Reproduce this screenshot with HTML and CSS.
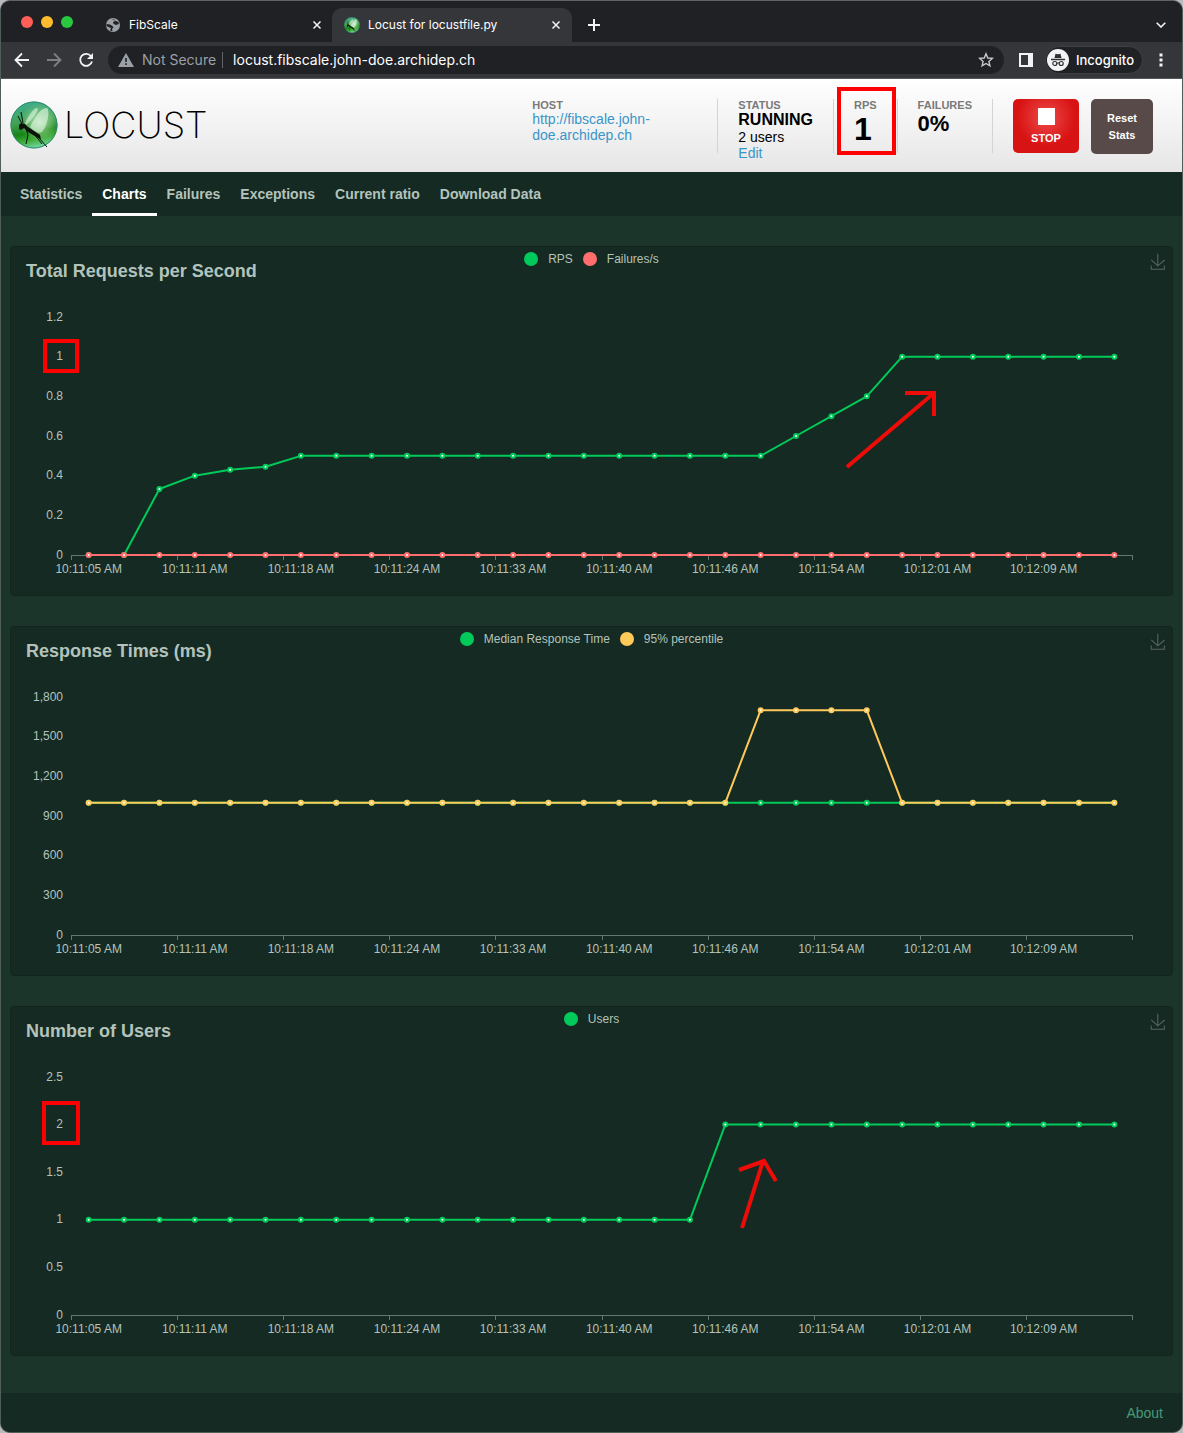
FILE: index.html
```html
<!DOCTYPE html>
<html lang="en">
<head>
<meta charset="utf-8">
<meta name="viewport" content="width=device-width, initial-scale=1">
<title>Locust for locustfile.py</title>
<link rel="stylesheet" href="styles.css">
</head>
<body>
<svg class="defs" width="0" height="0" aria-hidden="true">
  <defs>
    <linearGradient id="ball" x1="0.4" y1="0" x2="0.6" y2="1">
      <stop offset="0" stop-color="#3fae8d"/><stop offset="0.4" stop-color="#43a155"/>
      <stop offset="0.64" stop-color="#168416"/><stop offset="0.8" stop-color="#3dab38"/><stop offset="1" stop-color="#7ce0b4"/>
    </linearGradient>
    <radialGradient id="glow" cx="0.62" cy="0.45" r="0.42">
      <stop offset="0" stop-color="#e4f7dc" stop-opacity="0.8"/><stop offset="1" stop-color="#a8e09a" stop-opacity="0"/>
    </radialGradient>
    <symbol id="locust" viewBox="0 0 48 48">
      <circle cx="24" cy="24" r="23.500" fill="url(#ball)"/>
      <circle cx="24" cy="24" r="23.500" fill="url(#glow)"/>
      <circle cx="24" cy="24" r="23" fill="none" stroke="#2d8a78" stroke-width="1"/>
      <path d="M15 23C18 14 24 7 27 7C30 8 23 18 16 24Z" fill="#d9f3dc" opacity="0.65"/>
      <path d="M20 26C25 15 32 6 37 7C40 9 38 24 32 31C28 33 24 30 20 26Z" fill="#d9f3dc" opacity="0.65"/>
      <path d="M9 24L11 22L15 23L18 26L24 30L30 34L31 38L28 37L18 31L14 27L11 29L9 28Z" fill="#0a120a"/>
      <path d="M12 23L8 15M13 22L11 11M16 28L18 34L16 43M25 34L32 43M29 37L37 46" fill="none" stroke="#0a120a" stroke-width="1"/>
    </symbol>
    <symbol id="close" viewBox="0 0 10 10">
      <path d="M1.500 1.500L8.500 8.500M8.500 1.500L1.500 8.500" fill="none" stroke="currentColor" stroke-width="1.500"/>
    </symbol>
    <symbol id="download" viewBox="0 -2 60 62">
      <path d="M4.700 22.900L29.300 45.500L54.700 23.400M4.600 43.600L4.600 58L53.800 58L53.800 43.600M29.200 45.100L29.200 0" fill="none" stroke="currentColor" stroke-width="4"/>
    </symbol>
  </defs>
</svg>

<div class="window">
  <div class="tabstrip">
    <div class="lights"><span class="light red"></span><span class="light amber"></span><span class="light green"></span></div>
    <div class="tab">
      <svg class="favicon" viewBox="0 0 16 16" aria-hidden="true"><circle cx="8" cy="8" r="7" fill="#9aa0a6"/><path d="M6.500 2.200L9.500 2.500L10 4L8 5L8.500 6.800L11 8L13.800 7L13.500 5ZM1.500 7L5 7.500L7.500 9L8.500 10.500L7 12L7.500 14.200L5 13.500L6 11L3.500 10L1.500 9Z" fill="#202124"/></svg>
      <span class="tab-title">FibScale</span>
      <button class="icon-button" aria-label="Close tab"><svg width="10" height="10"><use href="#close"/></svg></button>
    </div>
    <div class="tab active">
      <svg class="favicon" aria-hidden="true"><use href="#locust"/></svg>
      <span class="tab-title">Locust for locustfile.py</span>
      <button class="icon-button" aria-label="Close tab"><svg width="10" height="10"><use href="#close"/></svg></button>
    </div>
    <button class="icon-button new-tab" aria-label="New tab"><svg width="12" height="12" viewBox="0 0 12 12"><path d="M6 0V12M0 6H12" stroke="currentColor" stroke-width="2"/></svg></button>
    <button class="icon-button tab-search" aria-label="Search tabs"><svg width="10" height="6" viewBox="0 0 10 6"><path d="M0.700 0.700L5 5L9.300 0.700" fill="none" stroke="currentColor" stroke-width="1.600"/></svg></button>
  </div>

  <div class="toolbar">
    <button class="icon-button" aria-label="Back"><svg width="16" height="16" viewBox="0 0 16 16"><path d="M15 8H2M8 1.500L1.500 8L8 14.500" fill="none" stroke="currentColor" stroke-width="1.800"/></svg></button>
    <button class="icon-button dim" aria-label="Forward"><svg width="16" height="16" viewBox="0 0 16 16"><path d="M1 8H14M8 1.500L14.500 8L8 14.500" fill="none" stroke="currentColor" stroke-width="1.800"/></svg></button>
    <button class="icon-button" aria-label="Reload"><svg width="16" height="16" viewBox="0 0 16 16"><path d="M13 4.200A6 6 0 1 0 14 9.500" fill="none" stroke="currentColor" stroke-width="1.800"/><path d="M15 1V7H9Z" fill="currentColor"/></svg></button>
    <div class="address">
      <svg width="16" height="14" viewBox="0 0 16 14" aria-hidden="true"><path d="M8 0L16 14H0Z" fill="#9aa0a6"/><path d="M8 5V9M8 10.200V12" stroke="#202124" stroke-width="1.600"/></svg>
      <label class="insecure" for="url">Not Secure</label>
      <input id="url" class="url" type="text" value="locust.fibscale.john-doe.archidep.ch">
      <button class="icon-button star" aria-label="Bookmark this page"><svg width="16" height="16" viewBox="0 0 16 16"><path d="M8 1.800L9.800 6L14.300 6.400L10.900 9.400L11.900 13.800L8 11.500L4.100 13.800L5.100 9.400L1.700 6.400L6.200 6Z" fill="none" stroke="currentColor" stroke-width="1.400"/></svg></button>
    </div>
    <button class="icon-button panel" aria-label="Side panel"><svg width="14" height="14" viewBox="0 0 14 14"><path d="M1 1H13V13H1Z" fill="none" stroke="currentColor" stroke-width="2"/><path d="M9 1H13V13H9Z" fill="currentColor"/></svg></button>
    <button class="incognito">
      <svg width="22" height="22" viewBox="0 0 22 22" aria-hidden="true"><circle cx="11" cy="11" r="11" fill="#f1f3f4"/><path d="M7.500 9L8.500 4.800L11 5.300L13.500 4.800L14.500 9Z" fill="#303134"/><path d="M4 10.500H18" stroke="#303134" stroke-width="1.400"/><path d="M9.800 14.300Q11 13.500 12.200 14.300" fill="none" stroke="#303134"/><circle cx="7.800" cy="14.500" r="2" fill="none" stroke="#303134" stroke-width="1.200"/><circle cx="14.200" cy="14.500" r="2" fill="none" stroke="#303134" stroke-width="1.200"/></svg>
      Incognito
    </button>
    <button class="icon-button menu" aria-label="Menu"><svg width="4" height="14" viewBox="0 0 4 14"><path d="M0.500 0.500H3.500V3.500H0.500ZM0.500 5.500H3.500V8.500H0.500ZM0.500 10.500H3.500V13.500H0.500Z" fill="currentColor"/></svg></button>
  </div>

  <header class="top">
    <a class="logo" href="#"><svg width="48" height="48" aria-hidden="true"><use href="#locust"/></svg><span class="wordmark">LOCUST</span></a>
    <div class="stats">
      <div class="stat host"><div class="label">HOST</div><a href="#">http://fibscale.john-doe.archidep.ch</a></div>
      <div class="stat"><div class="label">STATUS</div><div class="state">RUNNING</div><div>2 users</div><a href="#">Edit</a></div>
      <div class="stat rps"><div class="label">RPS</div><div class="rate">1</div><span class="mark mark-rps"></span></div>
      <div class="stat"><div class="label">FAILURES</div><div class="ratio">0%</div></div>
    </div>
    <div class="actions">
      <button class="stop"><span class="square"></span>STOP</button>
      <button class="reset">Reset Stats</button>
    </div>
  </header>

  <nav class="menu-bar">
    <a href="#">Statistics</a>
    <a href="#" class="current">Charts</a>
    <a href="#">Failures</a>
    <a href="#">Exceptions</a>
    <a href="#">Current ratio</a>
    <a href="#">Download Data</a>
  </nav>

  <main>
    <section class="card">
      <div class="card-head">
        <h2>Total Requests per Second</h2>
        <ul class="legend"><li><span class="dot green-dot"></span>RPS</li><li><span class="dot red-dot"></span>Failures/s</li></ul>
        <button class="icon-button save" aria-label="Download as image"><svg width="16" height="17"><use href="#download"/></svg></button>
      </div>
      <div class="plot" data-chart="rps"></div>
      <span class="mark mark-one"></span>
      <svg class="arrow arrow-rps" width="96" height="84" viewBox="0 0 96 84" aria-hidden="true"><path d="M4 79L91 5M62 5H91V28"/></svg>
    </section>
    <section class="card">
      <div class="card-head">
        <h2>Response Times (ms)</h2>
        <ul class="legend"><li><span class="dot green-dot"></span>Median Response Time</li><li><span class="dot yellow-dot"></span>95% percentile</li></ul>
        <button class="icon-button save" aria-label="Download as image"><svg width="16" height="17"><use href="#download"/></svg></button>
      </div>
      <div class="plot" data-chart="times"></div>
    </section>
    <section class="card">
      <div class="card-head">
        <h2>Number of Users</h2>
        <ul class="legend"><li><span class="dot green-dot"></span>Users</li></ul>
        <button class="icon-button save" aria-label="Download as image"><svg width="16" height="17"><use href="#download"/></svg></button>
      </div>
      <div class="plot" data-chart="users"></div>
      <span class="mark mark-two"></span>
      <svg class="arrow arrow-users" width="46" height="78" viewBox="0 0 46 78" aria-hidden="true"><path d="M7 73L28 6M4 15L29 6L41 26"/></svg>
    </section>
  </main>

  <footer><a href="#">About</a></footer>
</div>
<script src="charts.js"></script>
</body>
</html>
```
FILE: styles.css
```css
* { box-sizing: border-box; }
body {
  margin: 0;
  background: #b9babc;
  font-family: "Liberation Sans", Arial, sans-serif;
  font-size: 14px;
  line-height: 16px;
}
button { font: inherit; border: 0; padding: 0; margin: 0; background: none; cursor: pointer; }
a { text-decoration: none; }
.defs { position: absolute; }
.window {
  display: flex;
  flex-direction: column;
  min-height: 100vh;
  border: 1px solid #4f5f58;
  border-top-color: #5f6164;
  border-radius: 10px;
  overflow: hidden;
  background: #1b352b;
}

/* Browser chrome */
.tabstrip, .toolbar { font-family: Inter, "Liberation Sans", sans-serif; color: #fff; display: flex; align-items: center; }
.tabstrip { height: 41px; background: #202124; padding: 7px 16px 0 20px; }
.lights { display: flex; gap: 8px; width: 71px; margin-top: -7px; }
.light { width: 12px; height: 12px; border-radius: 50%; }
.red { background: #ff5f57; }
.amber { background: #febc2e; }
.green { background: #28c840; }
.icon-button { display: flex; align-items: center; justify-content: center; color: #f1f3f4; }
.tab { display: flex; align-items: center; width: 240px; height: 34px; padding: 0 10px 0 12px; border-radius: 10px 10px 0 0; font-size: 12px; }
.tab:not(.active) { padding: 0 9px 0 13px; }
.tab.active { background: #35363a; }
.tab-title { flex: 1; margin-left: 8px; }
.favicon { width: 16px; height: 16px; }
.tab .icon-button { width: 12px; height: 12px; }
.new-tab { margin-left: 16px; }
.tab-search { margin-left: auto; }
.toolbar { height: 37px; background: #35363a; border-bottom: 1px solid #55575a; padding: 0 19px 0 13px; gap: 16px; }
.dim { color: #7d7f83; }
.address { flex: 1; display: flex; align-items: center; height: 28px; padding: 0 10px; border-radius: 14px; background: #202124; font-size: 14px; margin-left: -2px; }
.insecure { color: #9aa0a6; margin-left: 8px; padding-right: 6px; border-right: 1px solid #5f6368; }
.url { flex: 1; min-width: 0; border: 0; outline: 0; padding: 0 0 0 10px; background: none; color: #fff; font: inherit; }
.star { color: #c7cace; }
.panel { margin-left: -1px; }
.incognito { display: flex; align-items: center; gap: 7px; height: 28px; padding: 0 8px 0 1px; margin-left: -4px; border: 1px solid #3f4043; border-radius: 14px; background: #202124; color: #fff; font-size: 13px; font-weight: 500; }

/* Locust header */
.top { display: flex; height: 93px; padding: 20px 29px 0 9px; background: linear-gradient(#fff, #e6e6e6); }
.logo { display: flex; gap: 6px; margin-top: 2px; align-items: flex-start; color: #000; }
.wordmark { font-family: Inter, sans-serif; font-weight: 200; font-size: 36px; line-height: 48px; }
.stats { display: flex; margin-left: auto; }
.stat { height: 54px; padding: 0 20px; border-right: 1px solid #d4d4d4; color: #000; }
.stat a { color: #3a95c9; }
.host { width: 206px; padding-right: 60px; }
.label { font-size: 11px; line-height: 12px; font-weight: bold; color: #7a7a7a; }
.state { font-size: 16px; line-height: 18px; font-weight: bold; }
.ratio { font-size: 22px; line-height: 26px; font-weight: bold; }
.rate { font-size: 32px; line-height: 36px; font-weight: bold; }
.rps { position: relative; }
.actions { display: flex; align-items: flex-start; gap: 12px; margin-left: 20px; }
.actions button { border-radius: 5px; color: #fff; font-size: 11px; font-weight: bold; }
.stop { display: flex; flex-direction: column; align-items: center; gap: 5px; width: 66px; height: 54px; padding-top: 9px; background: radial-gradient(circle at 50% 34%, #ee4a4a, #d81313 60%); }
.square { width: 17px; height: 17px; background: #fff; }
.actions .reset { width: 62px; height: 55px; padding: 0 12px; line-height: 17px; background: #584a48; }

.menu-bar { display: flex; height: 44px; padding-left: 9px; background: #152a22; font-weight: bold; }
.menu-bar a { padding: 0 10px; line-height: 44px; color: #b3c3bc; }
.menu-bar .current { color: #fff; border-bottom: 3px solid #fff; }

/* Charts */
main { flex: 1; display: flex; flex-direction: column; gap: 30px; padding: 30px 9px 37px; }
.card { position: relative; border: 1px solid #13251e; border-radius: 4px; background: #152a22; color: #b3c3bc; }
.card-head { display: grid; grid-template-columns: 1fr auto 1fr; align-items: start; height: 44px; }
h2 { margin: 14px 0 0 15px; font-size: 18px; line-height: 20px; }
.legend { display: flex; gap: 10px; margin: 5px 0 0; padding: 0; list-style: none; font-size: 12px; line-height: 14px; }
.legend li { display: flex; gap: 10px; }
.dot { width: 14px; height: 14px; border-radius: 50%; }
.green-dot { background: #00ca5a; }
.red-dot { background: #ff6d6d; }
.yellow-dot { background: #ffca5a; }
.save { justify-self: end; margin: 6px 6px 0 0; color: #59655f; }
.plot { height: 304px; }
.plot svg { display: block; }
.plot text { font-size: 12px; fill: #b3c3bc; }
.axis { fill: none; stroke: #66776f; stroke-width: 1; }
.line { fill: none; stroke-width: 2; stroke-linejoin: bevel; }
.point { fill: #fff; stroke-width: 2; }

/* Annotations */
.mark { position: absolute; border: 4px solid #f00; }
.mark-rps { left: 3px; top: -12px; width: 59px; height: 68px; }
.mark-one { left: 32px; top: 92px; width: 36px; height: 34px; }
.mark-two { left: 31px; top: 94px; width: 38px; height: 44px; }
.arrow { position: absolute; fill: none; stroke: #ee0c08; stroke-width: 4; }
.arrow-rps { right: 233px; top: 141px; }
.arrow-users { right: 391px; top: 148px; }

footer { display: flex; justify-content: flex-end; align-items: center; height: 39px; padding-right: 19px; background: #152a22; }
footer a { color: #459b79; }
```
FILE: charts.js
```js
const times = ["10:11:05 AM", "10:11:11 AM", "10:11:18 AM", "10:11:24 AM", "10:11:33 AM",
  "10:11:40 AM", "10:11:46 AM", "10:11:54 AM", "10:12:01 AM", "10:12:09 AM"];
const fill = (n, v) => Array(n).fill(v);
const green = "#00ca5a", red = "#ff6d6d", yellow = "#ffca5a";

const charts = {
  rps: {
    max: 1.2, step: 0.2,
    series: [
      { color: green, data: [0, 0, 0.333, 0.4, 0.43, 0.445, ...fill(14, 0.5), 0.6, 0.7, 0.8, ...fill(7, 1)] },
      { color: red, data: fill(30, 0) }
    ]
  },
  times: {
    max: 1800, step: 300,
    series: [
      { color: green, data: fill(30, 1000) },
      { color: yellow, data: [...fill(19, 1000), ...fill(4, 1700), ...fill(7, 1000)] }
    ]
  },
  users: {
    max: 2.5, step: 0.5,
    series: [{ color: green, data: [...fill(18, 1), ...fill(12, 2)] }]
  }
};

const grid = { left: 60, right: 40, top: 26, height: 238 };

function draw(el) {
  const { max, step, series } = charts[el.dataset.chart];
  const width = el.clientWidth;
  const inner = width - grid.left - grid.right;
  const bottom = grid.top + grid.height;
  const slot = inner / 30;
  const x = i => grid.left + slot * (i + 0.5);
  const y = v => bottom - v / max * grid.height;
  let out = "";

  for (let k = 0; k <= Math.round(max / step); k++) {
    const v = Math.round(k * step * 10) / 10;
    out += `<text x="52" y="${Math.floor(y(v)) + 4}" text-anchor="end">${v.toLocaleString("en-US")}</text>`;
  }
  let axis = `M${grid.left} ${bottom + 0.5}H${width - grid.right}`;
  for (let t = 0; t <= 10; t++) {
    axis += `M${Math.round(grid.left + slot * 3 * t) + 0.5} ${bottom}v5`;
  }
  out += `<path class="axis" d="${axis}"/>`;
  times.forEach((t, i) => {
    out += `<text x="${x(i * 3)}" y="${bottom + 18}" text-anchor="middle">${t}</text>`;
  });
  for (const s of series) {
    out += `<polyline class="line" stroke="${s.color}" points="${s.data.map((v, i) => x(i) + "," + y(v)).join(" ")}"/>`;
    s.data.forEach((v, i) => {
      out += `<circle class="point" stroke="${s.color}" cx="${x(i)}" cy="${y(v)}" r="2"/>`;
    });
  }
  el.innerHTML = `<svg width="${width}" height="304" role="img">${out}</svg>`;
}

const drawAll = () => document.querySelectorAll(".plot").forEach(draw);
drawAll();
window.addEventListener("resize", drawAll);
```
